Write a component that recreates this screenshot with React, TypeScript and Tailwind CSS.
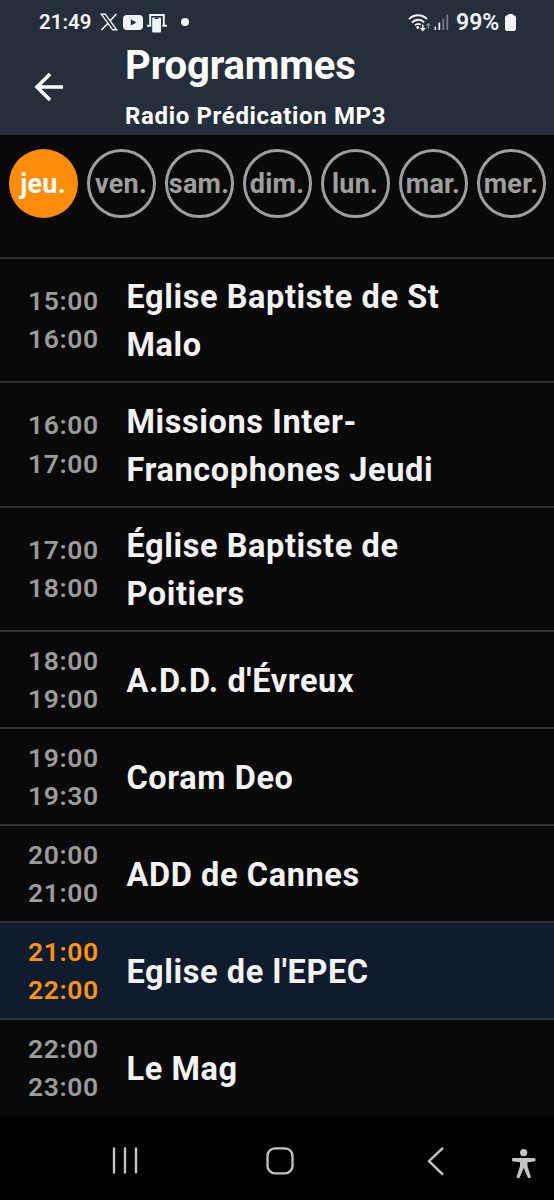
const days = ["jeu.", "ven.", "sam.", "dim.", "lun.", "mar.", "mer."];

const programmes = [
  { start: "15:00", end: "16:00", lines: ["Eglise Baptiste de St", "Malo"] },
  { start: "16:00", end: "17:00", lines: ["Missions Inter-", "Francophones Jeudi"] },
  { start: "17:00", end: "18:00", lines: ["Église Baptiste de", "Poitiers"] },
  { start: "18:00", end: "19:00", lines: ["A.D.D. d'Évreux"] },
  { start: "19:00", end: "19:30", lines: ["Coram Deo"] },
  { start: "20:00", end: "21:00", lines: ["ADD de Cannes"] },
  { start: "21:00", end: "22:00", lines: ["Eglise de l'EPEC"], current: true },
  { start: "22:00", end: "23:00", lines: ["Le Mag"] },
];

function StatusBar() {
  return (
    <div className="flex h-[44px] items-center pl-[39px] pr-[38px] text-[#f1f4f8]">
      <span className="w-[61px] whitespace-nowrap text-[20.5px] font-semibold leading-none">21:49</span>
      <svg width="18" height="18" viewBox="0 0 18 18" fill="none" stroke="currentColor" strokeWidth="1.4">
        <path d="M1.3 1.2h4l11.4 15.6h-4L1.3 1.2Z" />
        <path d="M16.3 1 10 8M8 10.2 1.4 17" strokeWidth="1.6" />
      </svg>
      <svg className="ml-[5px]" width="20" height="15" viewBox="0 0 20 15">
        <rect width="20" height="15" rx="4" fill="currentColor" />
        <path d="M7.8 4.2v6.4l5.6-3.2-5.6-3.2Z" fill="#252e3b" />
      </svg>
      <svg className="ml-1 mt-px" width="21" height="20" viewBox="0 0 21 20">
        <path d="M3.2 12.5V2h13.6v10.5" fill="none" stroke="currentColor" strokeWidth="2" />
        <path d="M0 11.8h4.2v2H0zM15.2 11.8H20v2h-4.8z" fill="currentColor" />
        <rect x="5.2" y="4.5" width="8.8" height="15" rx="1" fill="currentColor" />
        <path d="M7.8 4.5h3.6V6H7.8z" fill="#252e3b" />
      </svg>
      <span className="ml-[13px] size-[8px] rounded-full bg-[#f1f4f8]" />
      <div className="ml-auto flex items-center">
        <svg width="23" height="19" viewBox="0 0 23 19" fill="none" stroke="currentColor" strokeWidth="1.9">
          <path d="M1 6.2c5-5.2 13-5.2 18 0M4 9.5c3.5-3.7 8.9-3.7 12.2-.2M7 12.4c1.6-1.6 4-1.8 5.8-.6" />
          <circle cx="9.8" cy="14.5" r="1.4" fill="currentColor" stroke="none" />
          <path d="M14.8 11.5v5.6M12.6 15l2.2 2.3L17 15" strokeWidth="1.5" />
          <path d="M20.3 16v-5M18.4 12.6l1.9-2 1.9 2" strokeWidth="1.2" opacity=".5" />
        </svg>
        <svg className="ml-[3px]" width="15" height="16" viewBox="0 0 15 16" fill="currentColor">
          <rect x="0.5" y="12.5" width="1.6" height="3.5" rx=".6" />
          <rect x="4.4" y="8.5" width="1.8" height="7.5" rx=".6" />
          <rect x="8.4" y="4.5" width="1.8" height="11.5" rx=".6" opacity=".4" />
          <rect x="12.4" y="0.5" width="1.8" height="15.5" rx=".6" opacity=".4" />
        </svg>
        <span className="ml-[7px] w-[49px] whitespace-nowrap text-[23px] font-semibold leading-none">99%</span>
        <svg width="11" height="17" viewBox="0 0 11 17" fill="currentColor">
          <path d="M3 1.2C3 .5 3.4 0 4 0h3c.6 0 1 .5 1 1.2h.8c1.2 0 2.2 1 2.2 2.3v11.2c0 1.3-1 2.3-2.2 2.3H2.2C1 17 0 16 0 14.7V3.5C0 2.2 1 1.2 2.2 1.2H3Z" />
        </svg>
      </div>
    </div>
  );
}

function Header() {
  return (
    <header className="h-[135px] bg-[#252e3b]">
      <StatusBar />
      <div className="flex">
        <div className="w-[125px] pl-[34px] pt-[28px]">
          <svg width="30" height="30" viewBox="0 0 30 30" fill="none" stroke="white" strokeWidth="3.6">
            <path d="M29 15H3.5M16 2 3 15l13 13" />
          </svg>
        </div>
        <div className="text-white">
          <h1 className="whitespace-nowrap text-[40px] font-bold leading-[44px] tracking-[-0.15px]">Programmes</h1>
          <p className="mt-[14px] whitespace-nowrap text-[24px] font-bold leading-[28px] tracking-[0.65px]">
            Radio Prédication MP3
          </p>
        </div>
      </div>
    </header>
  );
}

function DayPicker() {
  return (
    <div className="flex h-[121.6px] gap-[9px] px-[8.5px] pt-[14px]">
      {days.map((day, i) => (
        <button
          key={day}
          className={`flex size-[69px] shrink-0 items-center justify-center rounded-full pt-[2px] text-[27px] font-bold leading-none tracking-[0.2px] ${
            i === 0 ? "bg-[#ff8c0a] text-white" : "border-[3px] border-[#9e9e9e] text-[#9e9e9e]"
          }`}
        >
          {day}
        </button>
      ))}
    </div>
  );
}

function NavigationBar() {
  return (
    <nav className="flex flex-1 items-start bg-black pl-[112px] pt-[30px] text-[#c4c4c4]">
      <svg width="26" height="27" viewBox="0 0 26 27" stroke="currentColor" strokeWidth="2.4" strokeLinecap="round">
        <path d="M2 1.5v24M13 1.5v24M24 1.5v24" />
      </svg>
      <svg className="ml-[128px]" width="28" height="28" viewBox="0 0 28 28" fill="none" stroke="currentColor" strokeWidth="2.3">
        <rect x="1.5" y="1.3" width="25" height="25" rx="7.5" />
      </svg>
      <svg className="ml-[133px]" width="18" height="29" viewBox="0 0 18 29" fill="none" stroke="currentColor" strokeWidth="2.4">
        <path d="M16 .8 2 14.2 16 27.6" />
      </svg>
      <svg className="ml-[67px] mt-[2px]" width="24" height="30" viewBox="0 0 24 30" fill="currentColor">
        <circle cx="11.7" cy="3.6" r="3.6" />
        <path d="M1.5 9h20.5a1.7 1.7 0 0 1 0 3.4l-6.5.8v4l3.2 10a1.6 1.6 0 0 1-3 1.1L11.7 19 7.8 28.3a1.6 1.6 0 0 1-3-1.1L8 17.2v-4l-6.5-.8a1.7 1.7 0 0 1 0-3.4Z" />
      </svg>
    </nav>
  );
}

export default function App() {
  return (
    <div className="flex h-[1200px] w-[554px] flex-col overflow-hidden bg-[#090909] font-['Roboto',sans-serif]">
      <Header />
      <DayPicker />
      <ul className="pb-[2px]">
        {programmes.map(({ start, end, lines, current }) => (
          <li
            key={start}
            className={`flex items-center border-t-2 border-[#303133] ${
              lines.length > 1 ? "h-[124.5px]" : "h-[97px]"
            } ${current ? "bg-[#0f1c2e]" : ""}`}
          >
            <div
              className={`w-[126.5px] pl-[28px] pt-px text-[26.5px] font-semibold leading-[38.6px] tracking-[0.6px] ${
                current ? "text-[#ff9214]" : "text-[#9b9b9b]"
              }`}
            >
              <div>{start}</div>
              <div>{end}</div>
            </div>
            <div className="whitespace-nowrap pt-[3px] text-[32.5px] font-bold leading-[48px] tracking-[0.6px] text-[#f3f3f3]">
              {lines.map((line) => (
                <div key={line}>{line}</div>
              ))}
            </div>
          </li>
        ))}
      </ul>
      <NavigationBar />
    </div>
  );
}
